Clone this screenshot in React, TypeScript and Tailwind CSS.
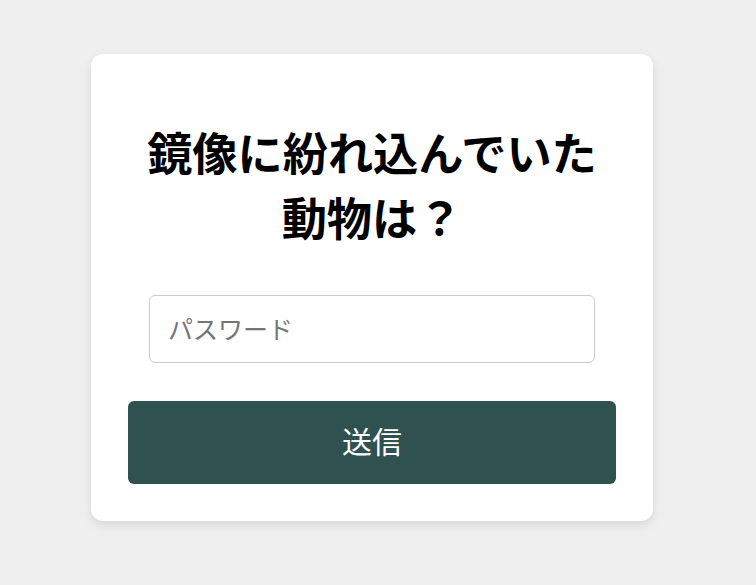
const font = { fontFamily: '"Noto Sans CJK JP", "Noto Sans", sans-serif' }

export default function App() {
  return (
    <main className="min-h-screen bg-[#efefef] pt-[54px] pl-[91px]" style={font}>
      <div className="w-[562px] h-[467px] bg-white rounded-xl shadow-[0_4px_10px_rgba(0,0,0,0.1)] px-[37px] pt-[65px] flex flex-col items-center">
        <h1 className="text-[45.2px] leading-[65px] font-bold text-black text-center">
          鏡像に紛れ込んでいた動物は？
        </h1>
        <input
          type="password"
          placeholder="パスワード"
          className="mt-[46px] w-[446px] h-[68px] border border-[#cccccc] rounded-md px-[18px] pb-[2px] text-[25px] placeholder:text-[#757575] outline-none"
        />
        <button className="mt-[38px] w-[488px] h-[83px] pb-[5px] bg-[#2f5150] text-white text-[30px] rounded-md">
          送信
        </button>
      </div>
    </main>
  )
}
